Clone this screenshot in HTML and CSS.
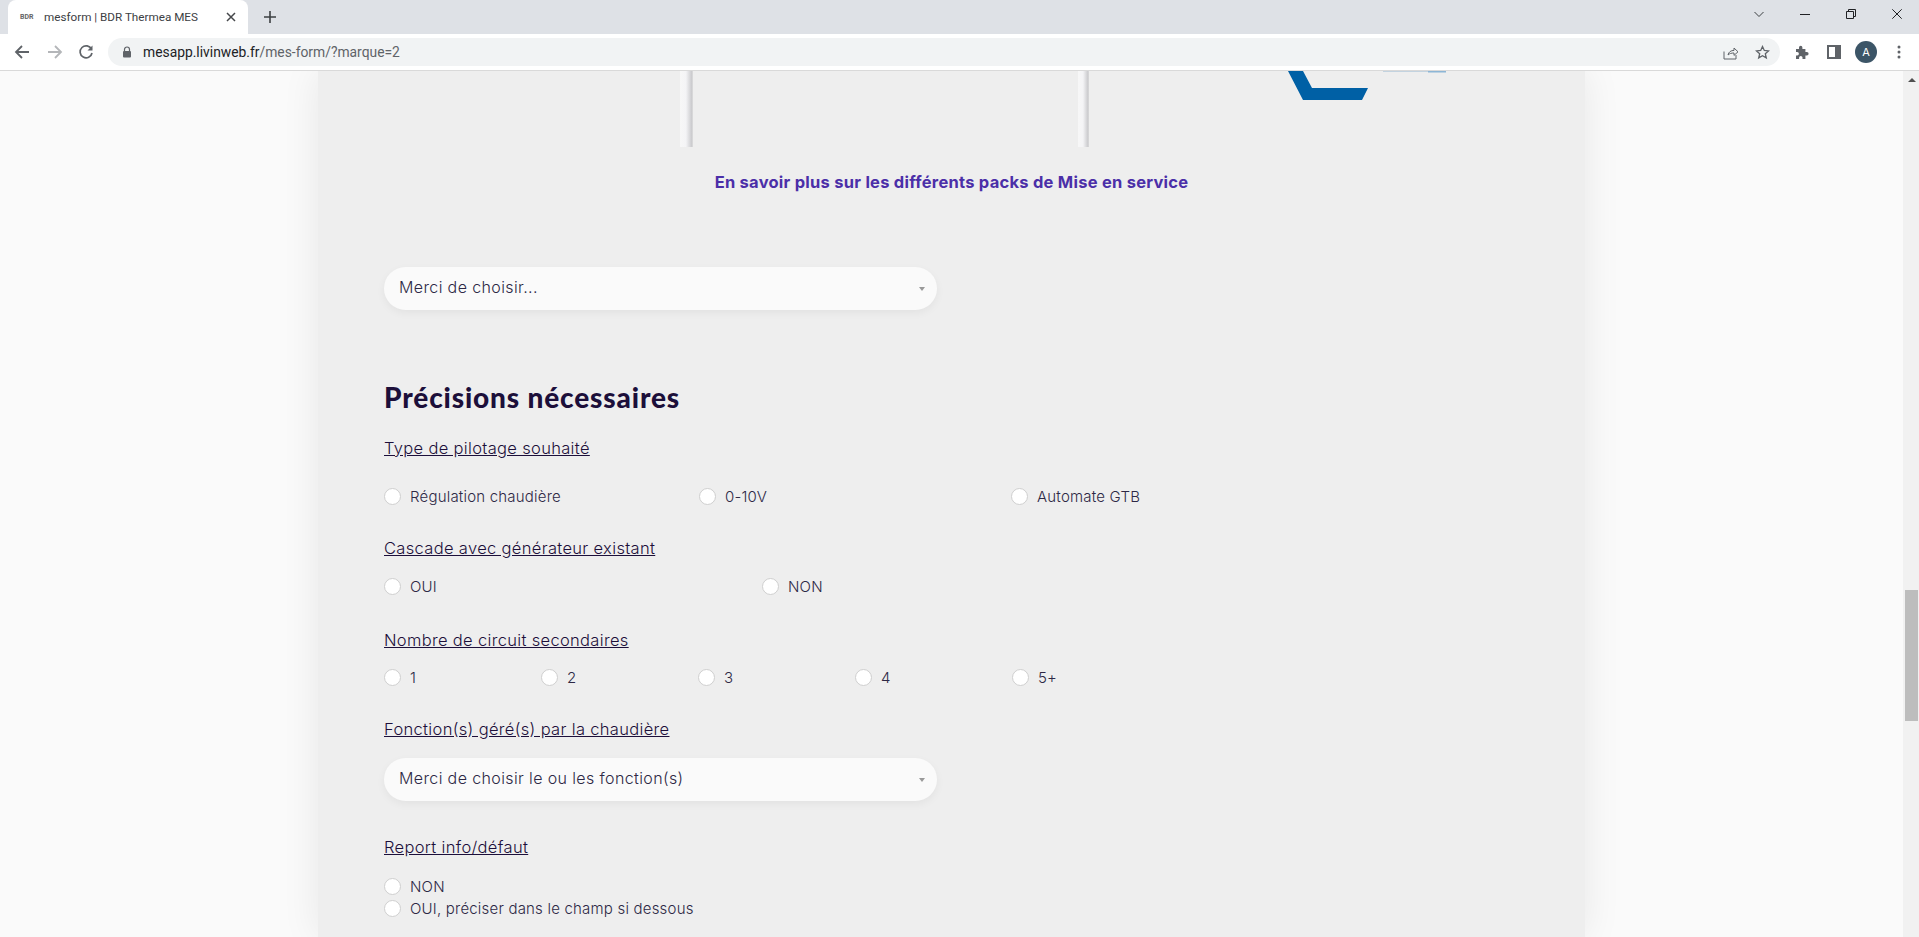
FILE: index.html
```html
<!DOCTYPE html>
<html lang="fr">
<head>
  <meta charset="UTF-8">
  <title>mesform | BDR Thermea MES</title>
  <link rel="stylesheet" href="styles.css">
</head>
<body>
  <div class="browser">
    <div class="tabstrip">
      <div class="tab">
        <span class="favicon">BDR</span>
        <span class="tab-title">mesform | BDR Thermea MES</span>
        <svg class="tab-close" width="10" height="10" viewBox="0 0 10 10"><path d="M1 1l8 8M9 1l-8 8" stroke="#45474a" stroke-width="1.5"/></svg>
      </div>
      <svg class="new-tab" width="12" height="12" viewBox="0 0 12 12"><path d="M6 0v12M0 6h12" stroke="#3c4043" stroke-width="1.6"/></svg>
      <div class="win-controls">
        <svg width="10" height="10" viewBox="0 0 10 10"><path d="M.5 3l4.500 4.500L9.500 3" fill="none" stroke="#3c4043" stroke-width="1"/></svg>
        <svg width="10" height="10" viewBox="0 0 10 10"><path d="M0 5.500h10" stroke="#202124" stroke-width="1"/></svg>
        <svg width="10" height="10" viewBox="0 0 10 10"><path d="M.5 2.500h7v7h-7zM2.500 2.500v-2h7v7h-2" fill="none" stroke="#202124" stroke-width="1"/></svg>
        <svg width="10" height="10" viewBox="0 0 10 10"><path d="M.3.300l9.400 9.400M9.700.300L.3 9.700" stroke="#202124" stroke-width="1"/></svg>
      </div>
    </div>
    <div class="toolbar">
      <svg class="nav-icon" width="16" height="16" viewBox="0 0 16 16"><path d="M15 8H2M8 2L2 8l6 6" fill="none" stroke="#5f6368" stroke-width="1.8"/></svg>
      <svg class="nav-icon nav-forward" width="16" height="16" viewBox="0 0 16 16"><path d="M1 8h13M8 2l6 6-6 6" fill="none" stroke="#b4b6b9" stroke-width="1.8"/></svg>
      <svg class="nav-icon" width="16" height="16" viewBox="0 0 16 16"><path d="M13.500 5.200A6 6 0 1 0 14 9" fill="none" stroke="#5f6368" stroke-width="1.700"/><path d="M14.500 1.500v5h-5z" fill="#5f6368"/></svg>
      <div class="omnibox">
        <svg class="lock" width="10" height="12" viewBox="0 0 10 12"><path d="M2.500 5V3.500a2.500 2.500 0 0 1 5 0V5" fill="none" stroke="#5f6368" stroke-width="1.200"/><rect x="1" y="5" width="8" height="6.500" rx="1" fill="#5f6368"/></svg>
        <span class="url"><b>mesapp.livinweb.fr</b>/mes-form/?marque=2</span>
        <svg class="omni-icon" width="16" height="15" viewBox="0 0 16 15"><path d="M1 6.500V14h12V10M5 10c.5-3 3-4.600 6-4.600V3l4 3.800-4 3.600V8C8.500 8 6.500 8.500 5 10z" fill="none" stroke="#5f6368" stroke-width="1"/></svg>
        <svg class="omni-icon" width="15" height="15" viewBox="0 0 15 15"><path d="M7.500 1.500l1.800 4 4.200.4-3.200 2.800 1 4.200-3.800-2.200-3.800 2.200 1-4.200L1.500 5.900l4.200-.4z" fill="none" stroke="#5f6368" stroke-width="1.300"/></svg>
      </div>
      <svg class="ext-icon" width="15" height="15" viewBox="0 0 15 15"><path d="M1 4h3V2.500a1.700 1.700 0 0 1 3.400 0V4h3v3h1.500a1.700 1.700 0 0 1 0 3.400h-1.500V14H7.500v-1.400a1.700 1.700 0 0 0-3.400 0V14H1v-3.500h1.200a1.700 1.700 0 0 0 0-3.400H1z" fill="#5f6368"/></svg>
      <svg class="panel-icon" width="14" height="14" viewBox="0 0 14 14"><path fill-rule="evenodd" d="M0 0h14v14H0zM2 2v10h6V2z" fill="#5f6368"/></svg>
      <span class="avatar">A</span>
      <svg class="menu-dots" width="4" height="14" viewBox="0 0 4 14"><circle cx="2" cy="2" r="1.500" fill="#5f6368"/><circle cx="2" cy="7" r="1.500" fill="#5f6368"/><circle cx="2" cy="12" r="1.500" fill="#5f6368"/></svg>
    </div>
  </div>

  <div class="viewport">
    <main class="sheet">
      <div class="packs">
        <span class="pack-rule"></span>
        <span class="pack-rule pack-rule-thin"></span>
        <svg class="pack-logo" width="160" height="29" viewBox="0 0 160 29"><path d="M0 0h15l9 17h56l-6 12H15z" fill="#0060a5"/><path d="M95 0h63v1H95z" fill="#c3d3e0"/><path d="M140 0h18v1.500h-18z" fill="#8db6d6"/></svg>
      </div>
      <p class="more-link">En savoir plus sur les différents packs de Mise en service</p>

      <div class="select first-select"><span>Merci de choisir...</span><i class="caret"></i></div>

      <h2 class="section-title">Précisions nécessaires</h2>

      <p class="field-label">Type de pilotage souhaité</p>
      <div class="radios radios-3">
        <label class="radio"><i></i>Régulation chaudière</label>
        <label class="radio"><i></i>0-10V</label>
        <label class="radio"><i></i>Automate GTB</label>
      </div>

      <p class="field-label label-cascade">Cascade avec générateur existant</p>
      <div class="radios radios-2">
        <label class="radio"><i></i>OUI</label>
        <label class="radio"><i></i>NON</label>
      </div>

      <p class="field-label label-circuit">Nombre de circuit secondaires</p>
      <div class="radios radios-5">
        <label class="radio"><i></i>1</label>
        <label class="radio"><i></i>2</label>
        <label class="radio"><i></i>3</label>
        <label class="radio"><i></i>4</label>
        <label class="radio"><i></i>5+</label>
      </div>

      <p class="field-label label-fonction">Fonction(s) géré(s) par la chaudière</p>
      <div class="select select-fonction"><span>Merci de choisir le ou les fonction(s)</span><i class="caret"></i></div>

      <p class="field-label label-report">Report info/défaut</p>
      <div class="radios-stack">
        <label class="radio"><i></i>NON</label>
        <label class="radio"><i></i>OUI, préciser dans le champ si dessous</label>
      </div>
    </main>
    <div class="scrollbar">
      <span class="scroll-up"></span>
      <span class="scroll-thumb"></span>
    </div>
  </div>
</body>
</html>
```

FILE: styles.css
```css
* {
  box-sizing: border-box;
}

html, body {
  height: 100%;
}

body {
  margin: 0;
  overflow: hidden;
  display: flex;
  flex-direction: column;
  font-family: "Inter", "Liberation Sans", sans-serif;
  background: #fafafa;
  color: #1c0f3a;
}

/* browser chrome */
.tabstrip {
  height: 34px;
  background: #dee1e6;
  display: flex;
  align-items: center;
  padding: 0 17px 0 8px;
}

.tab {
  width: 240px;
  height: 34px;
  padding: 0 12px;
  background: #fff;
  border-radius: 8px 8px 0 0;
  display: flex;
  align-items: center;
  font-family: "Roboto", sans-serif;
  font-size: 11.700px;
  color: #3c4043;
}

.favicon {
  width: 15px;
  margin-right: 9px;
  font-size: 7px;
  font-weight: 700;
  color: #666;
}

.tab-title {
  flex: 1;
  white-space: nowrap;
}

.new-tab {
  margin-left: 16px;
}

.win-controls {
  margin: 0 0 6px auto;
  display: flex;
  align-items: center;
  gap: 36px;
}

.toolbar {
  height: 37px;
  background: #fff;
  border-bottom: 1px solid #d9d9d9;
  display: flex;
  align-items: center;
  padding: 0 0 0 14px;
}

.nav-icon {
  margin-right: 17px;
}

.nav-forward {
  margin-right: 15px;
}

.omnibox {
  width: 1672px;
  height: 28px;
  margin-left: -3px;
  border-radius: 14px;
  background: #f1f3f4;
  display: flex;
  align-items: center;
  padding: 0 10px 0 14px;
  font-family: "Roboto", sans-serif;
  font-size: 13.850px;
  color: #5f6368;
}

.lock {
  margin-right: 11px;
}

.url {
  flex: 1;
}

.url b {
  font-weight: 400;
  color: #202124;
}

.omni-icon {
  margin-left: 16px;
}

.ext-icon {
  margin-left: 15px;
}

.panel-icon {
  margin-left: 17px;
}

.avatar {
  width: 22px;
  height: 22px;
  margin-left: 14px;
  border-radius: 50%;
  background: #3c5567;
  color: #fff;
  font-size: 11px;
  display: flex;
  align-items: center;
  justify-content: center;
}

.menu-dots {
  margin-left: 20px;
}

/* page */
.viewport {
  flex: 1;
  min-height: 0;
  display: flex;
  justify-content: space-between;
  overflow: hidden;
}

.sheet {
  width: 1267px;
  height: 100%;
  margin-left: 318px;
  padding: 0 66px;
  background: #eeeeee;
  box-shadow: 0 0 36px rgba(0, 0, 0, .08);
  font-size: 14px;
}

.packs {
  height: 76px;
  margin: 0 -66px;
  padding-left: 362px;
  display: flex;
  align-items: flex-start;
}

.pack-rule {
  width: 13px;
  height: 76px;
  margin-right: 385px;
  background: linear-gradient(to right, #f7f7f7, #f4f4f6 45%, #c9c9cc 92%, #e4e4e4);
}

.pack-rule-thin {
  width: 11px;
  margin-right: 199px;
}

.more-link {
  margin: 25px 0 0;
  text-align: center;
  font-size: 16.500px;
  font-weight: 700;
  letter-spacing: .25px;
  color: #4b2fa8;
}

.select {
  width: 553px;
  height: 43px;
  margin-top: 12px;
  padding: 0 12px 0 15px;
  display: flex;
  align-items: center;
  justify-content: space-between;
  border-radius: 22px;
  background: #fafafa;
  box-shadow: 0 3px 8px rgba(0, 0, 0, .05);
  font-size: 16px;
  font-weight: 300;
  letter-spacing: .38px;
  color: #2d2845;
}

.first-select {
  margin-top: 75px;
}

.select-fonction {
  margin-top: 19px;
}

.select span {
  margin-top: -3px;
}

.caret {
  width: 0;
  height: 0;
  border: 3.500px solid transparent;
  border-top: 4px solid #999;
  border-bottom: 0;
}

.section-title {
  margin: 68px 0 0;
  font-family: "Lato", sans-serif;
  font-size: 28px;
  font-weight: 900;
  letter-spacing: .85px;
  line-height: 38px;
  color: #1c0f3a;
}

.section-title + .field-label {
  margin-top: 22px;
}

.field-label {
  margin: 21px 0 0;
  font-size: 16.500px;
  font-weight: 300;
  letter-spacing: .33px;
  line-height: 20px;
  text-decoration: underline;
  color: #1c0f3a;
}

.label-cascade {
  margin-top: 31px;
}

.label-circuit {
  margin-top: 33px;
}

.label-fonction {
  margin-top: 31px;
}

.label-report {
  margin-top: 36px;
}

.radios {
  display: grid;
  margin-top: 17px;
}

.radios-3 {
  grid-template-columns: 315px 312px 1fr;
  margin-top: 27px;
}

.radios-2 {
  grid-template-columns: 378px 1fr;
}

.radios-5 {
  grid-template-columns: repeat(5, 157px);
  margin-top: 16px;
}

.radio {
  height: 22px;
  display: flex;
  align-items: center;
  font-size: 15px;
  font-weight: 300;
  letter-spacing: .2px;
  color: #2d2845;
}

.radio i {
  width: 17px;
  height: 17px;
  margin-right: 9px;
  border: 1px solid #cfcfcf;
  border-radius: 50%;
  background: #fff;
}

.radios-stack {
  margin-top: 18px;
}

.scrollbar {
  width: 16px;
  background: #f1f1f1;
  position: relative;
}

.scroll-up {
  display: block;
  height: 17px;
  position: relative;
}

.scroll-up::after {
  content: "";
  position: absolute;
  left: 5px;
  top: 7px;
  border: 4px solid transparent;
  border-top: 0;
  border-bottom: 4px solid #505050;
}

.scroll-thumb {
  position: absolute;
  top: 519px;
  left: 2px;
  width: 13px;
  height: 131px;
  background: #bdbdbd;
}
```
